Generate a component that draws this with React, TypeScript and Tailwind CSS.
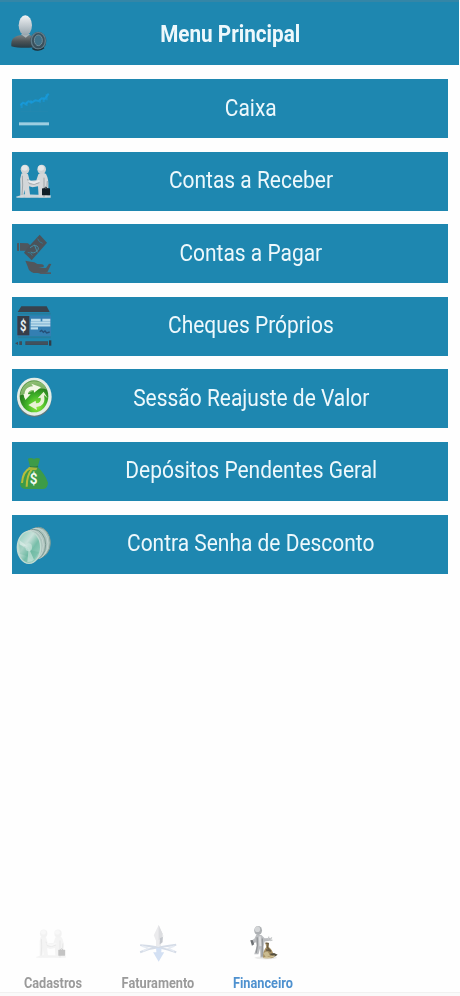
import type { ReactNode } from "react";

type MenuItem = {
  label: string;
  icon: ReactNode;
};

function UserSettingsIcon() {
  return (
    <svg className="h-[60px] w-[60px]" viewBox="0 6 180 180">
      <defs>
        <linearGradient id="head" x1="0" y1="0" x2="0" y2="1">
          <stop offset="0" stopColor="#f1f3f5" />
          <stop offset="1" stopColor="#94a3ac" />
        </linearGradient>
        <linearGradient id="torso" x1="0" y1="0" x2="0" y2="1">
          <stop offset="0" stopColor="#787f81" />
          <stop offset="0.5" stopColor="#4b5356" />
          <stop offset="1" stopColor="#263b45" />
        </linearGradient>
      </defs>
      <path d="M34 139c-2-20 7-30 26-33h29c17 3 27 13 27 33-20 6-62 6-82 0z" fill="url(#torso)" />
      <path d="M62 102l15 11 14-11z" fill="#a8b3b8" />
      <ellipse cx="76" cy="76" rx="20" ry="30" fill="url(#head)" />
      <ellipse cx="115" cy="123" rx="24" ry="28" fill="#39505c" />
      <ellipse cx="115" cy="122" rx="21" ry="25" fill="none" stroke="#607b88" strokeWidth="4" />
      <ellipse cx="115" cy="121" rx="12" ry="16" fill="#3f7188" stroke="#718f9c" strokeWidth="3" />
      <path d="M97 145q18 12 35-2" fill="none" stroke="#1c3038" strokeWidth="4" />
    </svg>
  );
}

function CardIcon({ children }: { children: ReactNode }) {
  return (
    <svg className="h-[59px] w-[42px] shrink-0" viewBox="12 9 126 177">
      {children}
    </svg>
  );
}

function ChartIcon() {
  return (
    <CardIcon>
      <path d="M37 88l8-8 8 4 8-8 11 3 10-6 10 2 9-8 9 2 12-16" fill="none" stroke="#189bdc" strokeWidth="6" opacity=".8" />
      <path d="M41 80v16m15-19v13m13-17v10m27-14v11m11-16v14m9-24v19" stroke="#159ce2" strokeWidth="6" opacity=".5" />
      <path d="M38 107h82M67 68v39m29-37v37" stroke="#488ba5" strokeWidth="2" opacity=".2" />
      <rect x="33" y="139" width="90" height="9" fill="#9dcee1" />
    </CardIcon>
  );
}

function People() {
  return (
    <>
      <path d="M24 143l24-7 80 3v7H26z" fill="#c9d5da" />
      <path d="M40 74q11-7 20 2l5 19 20-1 6-18q10-9 23-1 9 16 7 40l-4 30H92l-2-33-16 3-11-3 4 33H52l-3-23-3 23h-9V107q-2-20 3-33z" fill="#d4d7d9" />
      <path d="M43 80l1 28-2 30m17-48l5 14 15 2 15-5m14-15v59m10-49l-3 35" fill="none" stroke="#a0a7ab" strokeWidth="3" />
      <path d="M61 96l17 6 17-7" fill="none" stroke="#e7eaec" strokeWidth="6" />
      <ellipse cx="51" cy="61" rx="13" ry="14" fill="#cfd3d5" />
      <ellipse cx="101" cy="61" rx="13" ry="14" fill="#cfd3d5" />
      <ellipse cx="50" cy="57" rx="9" ry="8" fill="#e5e7e8" />
      <ellipse cx="99" cy="57" rx="9" ry="8" fill="#e5e7e8" />
      <path d="M108 119q5-9 11 0" fill="none" stroke="#1d2a30" strokeWidth="3" />
      <rect x="102" y="118" width="24" height="21" rx="2" fill="#101e27" />
    </>
  );
}

function PayIcon() {
  return (
    <CardIcon>
      <path d="M27 67l6-1v24l-6-1zm9-1l24 1 18 16-5 16-9 3-10-13H36z" fill="#4e565d" />
      <path d="M95 41l22 24-46 53-23-23 13-17z" fill="#4b535a" />
      <path d="M59 94q10-1 14 10M89 53q3 11 15 14" fill="none" stroke="#347891" strokeWidth="3" />
      <path d="M66 80q12-11 21-5 10 9-4 18-8 6-15 0m11-22l9 23" fill="none" stroke="#438ba3" strokeWidth="3" />
      <path d="M52 119l16 3q12 0 20 7l14 1q9 3 4 8l-15 2 23 1 9-13 7 1-12 25-16 5-13-3H77q-15-4-17-17z" fill="#50565c" />
      <path d="M97 154h32v5h-32z" fill="#535961" />
    </CardIcon>
  );
}

function ChequeIcon() {
  return (
    <CardIcon>
      <path d="M40 37h76l9 17H29z" fill="#38424d" />
      <path d="M30 59h98M30 130h98" stroke="#287b9b" strokeWidth="5" />
      <rect x="27" y="65" width="102" height="61" fill="#347fb2" />
      <rect x="28" y="66" width="36" height="58" fill="#363d49" />
      <text x="46" y="110" textAnchor="middle" fontFamily="Roboto, sans-serif" fontWeight="700" fontSize="43" transform="translate(10 0) scale(.78 1)" fill="#e5eef2">$</text>
      <path d="M69 78h29m5 0h24M68 86h59M68 94h59M68 103h22" stroke="#bbdceb" strokeWidth="7" />
      <path d="M95 113l6-4 5 6 5-4 5 6 9-3" fill="none" stroke="#254f77" strokeWidth="4" />
      <path d="M21 148l9-5v10zm13-6h8v11h-8zm18 0h68v11H52z" fill="#3e4c59" />
      <path d="M55 147h64" stroke="#4b5b67" strokeWidth="2" />
      <path d="M123 139h7v16h-7z" fill="#303d49" />
    </CardIcon>
  );
}

function RefreshIcon() {
  return (
    <CardIcon>
      <defs>
        <radialGradient id="leaf" cx=".6" cy=".82" r=".9">
          <stop offset="0" stopColor="#90ed3d" />
          <stop offset=".38" stopColor="#42b529" />
          <stop offset=".7" stopColor="#277d1e" />
          <stop offset="1" stopColor="#79aa61" />
        </radialGradient>
      </defs>
      <ellipse cx="79" cy="98" rx="51" ry="55" fill="#62787a" />
      <ellipse cx="79" cy="92" rx="52" ry="57" fill="#e4ede6" />
      <ellipse cx="78" cy="91" rx="43" ry="48" fill="url(#leaf)" />
      <path d="M36 88q9-41 44-42 25 0 37 25-17-8-36 1-24 13-45 16z" fill="#b8d895" opacity=".6" />
      <path d="M50 97q-5-34 25-36l-5-8 29 11-21 16-1-8q-18 0-17 14z" fill="#f3f8e6" />
      <path d="M46 84l22 1-16 17z" fill="#f3f8e6" />
      <path d="M108 87q7 33-23 36l2 9-26-15 22-13 1 8q17-1 14-17l-9 2 18-20 12 20z" fill="#e8f2d5" />
    </CardIcon>
  );
}

function MoneyBagIcon() {
  return (
    <CardIcon>
      <path d="M60 59q9-4 18 1 9-5 18-1l-7 25q22 20 31 47-1 17-14 19H52q-15-2-16-16 7-30 30-51z" fill="#3d9b48" />
      <path d="M66 83q13 4 24-1" fill="none" stroke="#297b44" strokeWidth="4" />
      <path d="M67 87q-23 10-25 45m31-43q-17 20-17 54" fill="none" stroke="#b6bd3c" strokeWidth="6" />
      <path d="M62 84l26 2-3 8-24-2z" fill="#a9b63b" />
      <text x="77" y="136" textAnchor="middle" fontFamily="Roboto, sans-serif" fontWeight="700" fontSize="46" transform="translate(9 0) scale(.88 1)" fill="#f3faf1">$</text>
    </CardIcon>
  );
}

function CoinsIcon() {
  return (
    <CardIcon>
      <defs>
        <linearGradient id="coin" x1="0" y1="0" x2="1" y2="1">
          <stop offset="0" stopColor="#80c9b3" />
          <stop offset=".38" stopColor="#c9e1da" />
          <stop offset=".6" stopColor="#77bea9" />
          <stop offset="1" stopColor="#a9d8ca" />
        </linearGradient>
      </defs>
      {[91, 84, 77, 70].map((x, index) => (
        <ellipse key={x} cx={x} cy={92 + index * 3} rx="36" ry="46" fill="#adc5be" stroke={index % 2 ? "#c7d5d1" : "#7d9892"} strokeWidth="3" />
      ))}
      <ellipse cx="63" cy="106" rx="35" ry="48" fill="url(#coin)" stroke="#c2dbd2" strokeWidth="4" />
      <path d="M33 94q19 21 60 26l-18 27q-15-17-40-21z" fill="#59b096" opacity=".3" />
      <path d="M34 84l26 20-25-5zm28 23l-4 43q14 1 20-7z" fill="#e8f3ef" opacity=".5" />
      <ellipse cx="62" cy="106" rx="10" ry="12" fill="#d3e9e2" opacity=".6" />
    </CardIcon>
  );
}

const items: MenuItem[] = [
  { label: "Caixa", icon: <ChartIcon /> },
  { label: "Contas a Receber", icon: <CardIcon><People /></CardIcon> },
  { label: "Contas a Pagar", icon: <PayIcon /> },
  { label: "Cheques Próprios", icon: <ChequeIcon /> },
  { label: "Sessão Reajuste de Valor", icon: <RefreshIcon /> },
  { label: "Depósitos Pendentes Geral", icon: <MoneyBagIcon /> },
  { label: "Contra Senha de Desconto", icon: <CoinsIcon /> },
];

function MenuCard({ item }: { item: MenuItem }) {
  return (
    <button className="flex h-[59px] w-full shrink-0 items-center bg-[#1e87b0] text-[#edf8fc]">
      {item.icon}
      <span className="flex flex-1 justify-center pb-[2px]">
        <span className="scale-x-[0.873] whitespace-nowrap text-[24px] leading-[30px]">{item.label}</span>
      </span>
    </button>
  );
}

function BillingIcon() {
  return (
    <svg className="h-[42px] w-[42px]" viewBox="0 0 126 126">
      <path d="M65 9L50 41l7 17v16h15l2-16 6-15z" fill="#ebebed" />
      <path d="M65 9v47l10-7 2-14z" fill="#dcdde0" />
      <path d="M69 50l9-5-1 17-9 7z" fill="#c2c5cb" />
      <path d="M8 71l27 3 29 4 28-4 27-4M8 93l27-10 30-5 28 7 26 8" fill="none" stroke="#d5dce7" strokeWidth="6" />
      <path d="M13 74l20 7-16 8m97-15-19 7 18 9" fill="none" stroke="#e6ebf3" strokeWidth="5" />
      <path d="M57 80h17l-1 13h9l-17 29-17-29h10z" fill="#d3e0f3" />
    </svg>
  );
}

function FinanceIcon() {
  return (
    <svg className="h-[42px] w-[42px]" viewBox="0 0 126 126">
      <ellipse cx="72" cy="110" rx="35" ry="5" fill="#ebebeb" />
      <path d="M42 40h16l10 10 18-1 3 8-21 3-3 15 1 34H55l-1-28-5 18H36l8-25-2-12-10 4-5-8 10-7z" fill="#bbbdc0" />
      <path d="M45 47l1 24-4 24m19-44v24l-1 31" fill="none" stroke="#94979a" strokeWidth="4" />
      <path d="M53 44l2 30" stroke="#dcddde" strokeWidth="6" />
      <ellipse cx="48" cy="26" rx="12" ry="14" fill="#adb0b3" />
      <ellipse cx="46" cy="22" rx="8" ry="9" fill="#d4d6d8" />
      <path d="M24 56l7-1 5 13-7 5z" fill="#6d7073" />
      <path d="M70 64h10v12q15 12 17 32-15 7-34 1 0-20 10-32z" fill="#a69063" />
      <path d="M71 65l8 1-2 13 10 11-12-5 1 18" fill="none" stroke="#675a42" strokeWidth="4" />
      <path d="M64 96l12-7 9 14-13 6z" fill="#cabb90" />
      <path d="M82 98l15-3 11 6-9 6z" fill="#55503f" />
      <path d="M76 110l23-6m-34 6l13-1" stroke="#d1c299" strokeWidth="4" />
      <path d="M79 54l2-9m4 10l5-8m-5 10l7-1" stroke="#c7c9ca" strokeWidth="4" />
    </svg>
  );
}

function BottomTab({ label, icon, active = false }: { label: string; icon: ReactNode; active?: boolean }) {
  return (
    <button className={`flex w-[105px] flex-col items-center ${active ? "text-[#4e91cf]" : "text-[#9a9a9a]"}`}>
      {icon}
      <span className="mt-[11px] scale-x-[0.91] whitespace-nowrap text-[14px] font-bold leading-[18px]">{label}</span>
    </button>
  );
}

export default function App() {
  return (
    <div className="flex h-[996px] w-[460px] flex-col overflow-hidden bg-[#fefefe] font-['Roboto',sans-serif]">
      <header className="flex h-[65px] w-[459px] shrink-0 items-start border-t-2 border-[#3486a7] bg-[#1e87b0]">
        <UserSettingsIcon />
        <h1 className="flex flex-1 justify-center pt-[17px]">
          <span className="scale-x-[0.862] whitespace-nowrap text-[24px] font-bold leading-[30px] text-[#edf8fc]">Menu Principal</span>
        </h1>
        <div className="w-[58px]" />
      </header>

      <main className="mt-[14px] ml-3 flex w-[436px] flex-1 flex-col gap-[13.6px]">
        {items.map((item) => (
          <MenuCard key={item.label} item={item} />
        ))}
      </main>

      <nav className="flex h-[71px] shrink-0 border-b border-[#f1f1f1]">
        <BottomTab
          label="Cadastros"
          icon={<svg className="h-[42px] w-[42px] opacity-25 grayscale" viewBox="12 21 143 143"><People /></svg>}
        />
        <BottomTab label="Faturamento" icon={<BillingIcon />} />
        <BottomTab label="Financeiro" icon={<FinanceIcon />} active />
      </nav>
      <div className="h-[3px] shrink-0 bg-[#fafafa]" />
    </div>
  );
}
